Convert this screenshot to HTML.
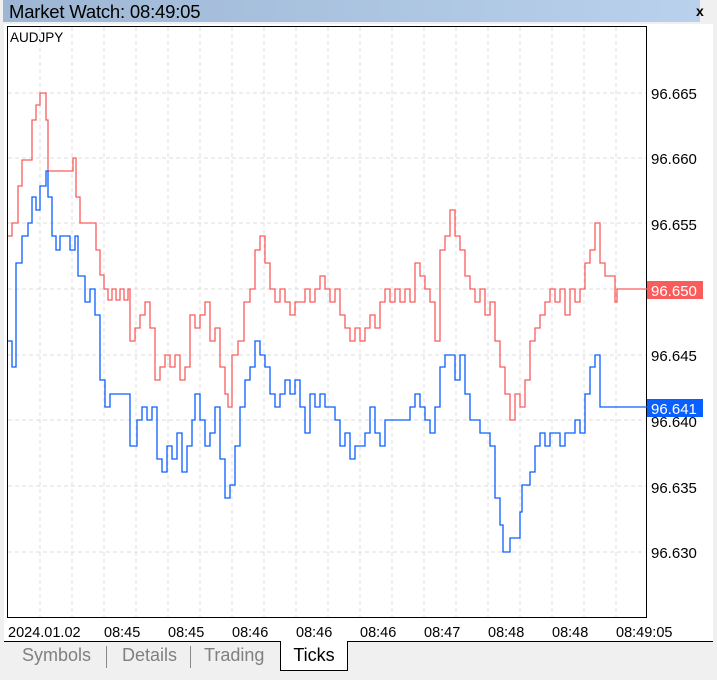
<!DOCTYPE html>
<html><head><style>
body{margin:0;width:717px;height:680px;background:#f0f0f0;font-family:"Liberation Sans",sans-serif;position:relative;overflow:hidden}
.t{position:absolute;left:3px;top:0;width:697px;height:22px;background:linear-gradient(90deg,#9db6d4,#b9d1ec)}
.t span{position:absolute;left:6px;top:1px;font-size:18.5px;color:#000;letter-spacing:-0.2px}
.x{position:absolute;left:696px;top:3px;font-size:14px;font-weight:bold}
.ch{position:absolute;left:4px;top:24px;width:709px;height:617px;background:#fff}
.tabs{position:absolute;left:4px;top:641px;width:709px;height:33px;border-top:1px solid #000;background:#f0f0f0}
.tab{position:absolute;top:3px;font-size:18px;color:#808080}
.sel{position:absolute;left:276px;top:-1px;width:66px;height:29px;background:#fff;border:1px solid #000;border-top:none;font-size:18px;text-align:center;line-height:28px}
</style></head><body>
<div class="t"><span>Market Watch: 08:49:05</span></div>
<div class="x">x</div>
<div class="ch"></div>
<svg style="position:absolute;left:0;top:0" width="717" height="680">
<g stroke="#dcdcdc" stroke-dasharray="4,3" stroke-width="1">
<path d="M40 27V617M72 27V617M104 27V617M136 27V617M168 27V617M200 27V617M232 27V617M264 27V617M296 27V617M328 27V617M360 27V617M392 27V617M424 27V617M456 27V617M488 27V617M520 27V617M552 27V617M584 27V617M616 27V617"/>
<path d="M8 93H646M8 158H646M8 223H646M8 289H646M8 355H646M8 420H646M8 486H646M8 552H646"/>
</g>
<rect x="7.5" y="26.5" width="639" height="591" fill="none" stroke="#000"/>
<path fill="none" stroke="#fa5c5c" stroke-width="1.3" d="M8 236H12V223H18V186H22V160H28V160H32V120H36V105H40V93H46V120H48V171H73V158H76V197H80V223H96V250H100V275H104V289H108V300H112V289H116V300H120V289H124V300H128V289H130V341H135V328H140V315H145V302H150V328H155V380H160V367H165V355H170V367H175V355H180V380H185V367H190V315H195V328H200V315H205V302H210V341H215V328H220V367H225V394H228V407H232V355H238V341H244V302H250V289H255V250H260V236H265V263H270V289H275V302H280V289H285V302H290V315H295V302H300V302H305V289H310V302H315V289H320V276H325V289H330V302H335V289H340V315H345V328H350V341H355V328H360V341H365V328H370V315H375V328H380V302H385V289H390V302H395V289H400V302H405V289H410V302H415V263H420V276H425V289H430V302H435V341H440V250H445V236H450V210H455V236H460V250H465V276H470V289H475V302H480V289H485V315H490V302H495V341H500V367H505V394H510V420H515V394H520V407H525V380H530V341H535V328H540V315H545V302H550V289H555V302H560V289H565V315H570V289H575V302H580V289H585V263H590V250H595V223H600V263H605V276H610V276H615V302H617V289H647"/>
<path fill="none" stroke="#0a5fff" stroke-width="1.3" d="M8 341H12V367H16V263H22V236H28V223H32V197H36V210H40V186H46V171H48V197H52V236H56V250H60V236H65V236H70V250H75V236H78V276H85V302H90V289H95V315H100V380H105V407H110V394H130V446H137V420H142V407H147V420H152V407H157V459H162V472H167V446H172V459H177V433H182V472H187V446H192V420H195V394H200V420H205V446H210V433H215V407H220V459H225V498H230V485H235V446H240V407H245V380H250V367H255V341H260V355H265V367H270V394H275V407H280V394H285V380H290V394H295V380H300V407H305V433H310V394H315V407H320V394H325V407H330V407H335V420H340V446H345V433H350V459H355V446H360V446H365V433H370V407H375V433H380V446H385V420H405V420H410V407H415V394H420V407H425V420H430V433H435V407H440V367H445V355H455V380H460V355H465V394H470V420H480V433H485V433H490V446H495V498H500V525H503V552H510V538H520V512H522V485H530V472H535V446H540V433H545V446H550V433H560V446H565V433H575V420H580V433H585V394H590V367H595V355H600V407H647"/>
<rect x="647" y="281" width="56" height="18" fill="#fa5c5c"/>
<rect x="647" y="399" width="56" height="18" fill="#0a5fff"/>
<g font-family="Liberation Sans,sans-serif" font-size="15" fill="#000">
<text x="10" y="42" font-size="13.5">AUDJPY</text>
<text x="651" y="99">96.665</text>
<text x="651" y="164">96.660</text>
<text x="651" y="230">96.655</text>
<text x="651" y="296" fill="#fff">96.650</text>
<text x="651" y="361">96.645</text>
<text x="651" y="427">96.640</text>
<text x="651" y="414" fill="#fff">96.641</text>
<text x="651" y="493">96.635</text>
<text x="651" y="558">96.630</text>
<g font-size="14.5">
<text x="8" y="637">2024.01.02</text>
<text x="104" y="637">08:45</text>
<text x="168" y="637">08:45</text>
<text x="232" y="637">08:46</text>
<text x="296" y="637">08:46</text>
<text x="360" y="637">08:46</text>
<text x="424" y="637">08:47</text>
<text x="488" y="637">08:48</text>
<text x="552" y="637">08:48</text>
<text x="616" y="637">08:49:05</text>
</g></g>
</svg>
<div class="tabs">
<span class="tab" style="left:18px">Symbols</span>
<span style="position:absolute;left:102px;top:4px;width:1px;height:22px;background:#888"></span>
<span class="tab" style="left:118px">Details</span>
<span style="position:absolute;left:186px;top:4px;width:1px;height:22px;background:#888"></span>
<span class="tab" style="left:200px">Trading</span>
<div class="sel">Ticks</div>
</div>
</body></html>
